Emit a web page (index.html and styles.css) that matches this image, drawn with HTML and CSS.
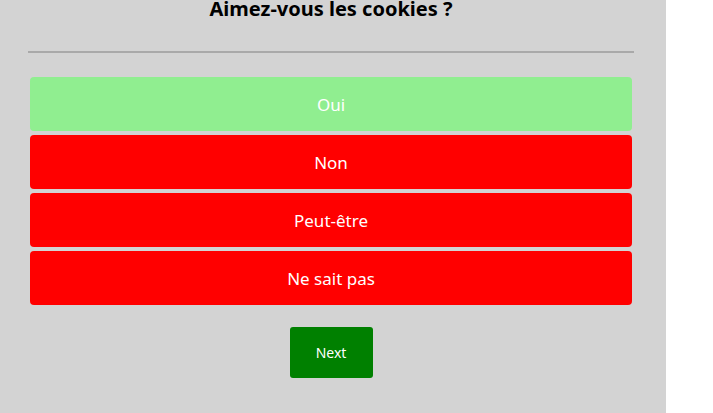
FILE: index.html
```html
<!DOCTYPE html>
<html lang="fr">
<head>
<meta charset="utf-8">
<link rel="stylesheet" href="styles.css">
</head>
<body>
<div class="panel">
  <h2 class="title">Aimez-vous les cookies ?</h2>
  <hr class="rule">
  <div class="answers">
    <div class="answer correct">Oui</div>
    <div class="answer wrong">Non</div>
    <div class="answer wrong">Peut-être</div>
    <div class="answer wrong">Ne sait pas</div>
  </div>
  <div class="actions">
    <button class="next">Next</button>
  </div>
</div>
</body>
</html>
```
FILE: styles.css
```css
html, body {
  margin: 0;
  padding: 0;
  background: #ffffff;
  font-family: "Noto Sans", "Open Sans", sans-serif;
}
.panel {
  width: 606px;
  height: 413px;
  padding: 0 32px 0 28px;
  background: #d3d3d3;
  display: flex;
  flex-direction: column;
  overflow: hidden;
}
.title {
  margin: -3px 0 0 0;
  height: 24px;
  line-height: 24px;
  font-size: 20px;
  font-weight: 700;
  text-align: center;
  color: #000;
}
.rule {
  margin: 30px 0 0 0;
  border: 0;
  height: 2px;
  background: #a9a9a9;
}
.answers {
  margin: 24px 2px 0 2px;
  display: flex;
  flex-direction: column;
  gap: 4px;
}
.answer {
  height: 54px;
  border-radius: 4px;
  display: flex;
  align-items: center;
  justify-content: center;
  color: #fff;
  font-size: 17px;
}
.correct { background: #90ee90; }
.wrong { background: #ff0000; }
.actions {
  margin-top: 22px;
  display: flex;
  justify-content: center;
}
.next {
  width: 83px;
  height: 51px;
  border: 0;
  border-radius: 3px;
  background: #008000;
  color: #fff;
  font-family: inherit;
  font-size: 14px;
  padding: 0;
}
```
